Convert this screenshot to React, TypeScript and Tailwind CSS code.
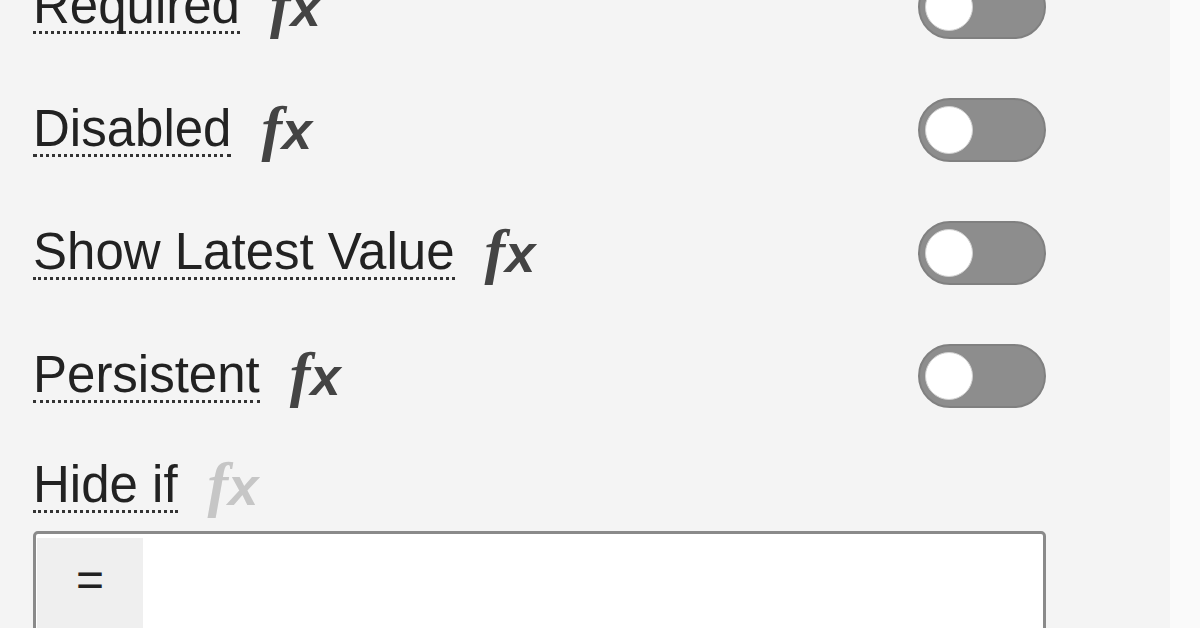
import React from 'react';

const rows = ['Required', 'Disabled', 'Show Latest Value', 'Persistent'];

const Fx = ({ muted }: { muted?: boolean }) => (
    <span
        className={`-translate-y-[6px] flex items-baseline h-[54px] leading-none italic font-bold ${muted ? 'text-[#c6c6c6]' : 'text-[#444]'}`}
    >
        <span className="font-['Liberation_Serif',serif] text-[62px]">f</span>
        <span className="font-['Liberation_Sans',Arial,sans-serif] font-semibold text-[54px]">x</span>
    </span>
);

const Label = ({ text, muted }: { text: string; muted?: boolean }) => (
    <div className="flex items-center gap-[30px]">
        <span className="inline-block leading-none text-[51px] text-[#222] border-b-[3px] border-dotted border-[#333]">
            {text}
        </span>
        <Fx muted={muted} />
    </div>
);

const Toggle = () => (
    <div className="flex items-center w-[128px] h-[64px] rounded-full bg-[#8d8d8d] border-2 border-[#808080]">
        <div className="ml-[5px] w-[48px] h-[48px] rounded-full bg-white border border-[#d0d0d0]"></div>
    </div>
);

export default function App() {
    return (
        <div className="flex w-[1200px] h-[628px] overflow-hidden bg-[#f4f4f4] font-['Liberation_Sans',Arial,sans-serif]">
            <div className="w-[1170px] shrink-0 pl-[33px] pr-[124px]">
                <div className="-mt-[55px]">
                    {rows.map((r) => (
                        <div key={r} className="flex items-center justify-between h-[123px]">
                            <Label text={r} />
                            <Toggle />
                        </div>
                    ))}
                </div>

                <div className="mt-[22px]">
                    <Label text="Hide if" muted />
                </div>

                <div className="mt-[18px] flex h-[140px] bg-white border-[3px] border-[#8a8a8a] rounded-[5px]">
                    <div className="mt-[4px] ml-[1px] w-[106px] bg-[#efefef]">
                        <div className="flex items-center justify-center h-[84px] text-[48px] leading-none text-[#222]">
                            =
                        </div>
                    </div>
                </div>
            </div>
            <div className="flex-1 bg-[#fafafa]"></div>
        </div>
    );
}
